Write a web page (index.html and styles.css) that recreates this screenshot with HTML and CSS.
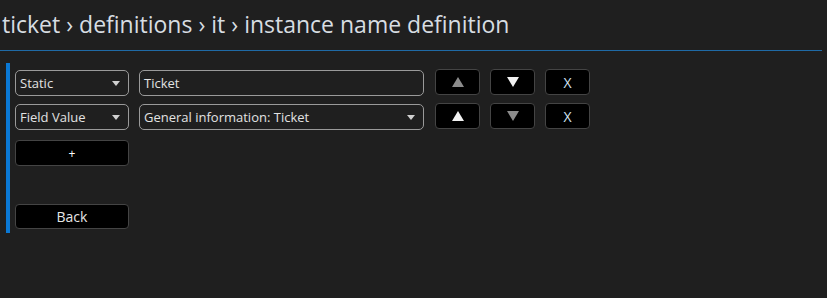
FILE: index.html
```html
<!DOCTYPE html>
<html lang="en">
<head>
    <meta charset="UTF-8">
    <title>instance name definition</title>
    <link rel="stylesheet" href="styles.css">
</head>
<body>
    <div class="crumbs">ticket › definitions › it › instance name definition</div>

    <div class="panel">
        <div class="part_row">
            <div class="pick"><span>Static</span><i class="caret"></i></div>
            <div class="field">Ticket</div>
            <button class="mini off"><svg width="12" height="10" viewBox="0 0 12 10"><path d="M6 0 L12 10 L0 10 Z"/></svg></button>
            <button class="mini"><svg width="12" height="10" viewBox="0 0 12 10"><path d="M0 0 L12 0 L6 10 Z"/></svg></button>
            <button class="mini">X</button>
        </div>
        <div class="part_row">
            <div class="pick"><span>Field Value</span><i class="caret"></i></div>
            <div class="field pick_wide"><span>General information: Ticket</span><i class="caret"></i></div>
            <button class="mini"><svg width="12" height="10" viewBox="0 0 12 10"><path d="M6 0 L12 10 L0 10 Z"/></svg></button>
            <button class="mini off"><svg width="12" height="10" viewBox="0 0 12 10"><path d="M0 0 L12 0 L6 10 Z"/></svg></button>
            <button class="mini">X</button>
        </div>
        <button class="wide_btn add">+</button>
        <button class="wide_btn back">Back</button>
    </div>
</body>
</html>
```
FILE: styles.css
```css
body{
    margin:0;
    background:#1f1f1f;
    font-family:"Open Sans", "Noto Sans", sans-serif;
    color:#e2e2e2;
}
.crumbs{
    margin-right:5px;
    padding:9px 0 0 2px;
    height:41px;
    font-size:23px;
    line-height:30px;
    color:#d7dde2;
    border-bottom:1px solid #1f6aa6;
    white-space:nowrap;
}
.panel{
    margin:12px 0 0 6px;
    border-left:4px solid #0a78d4;
    padding:7px 0 4px 5px;
    display:flex;
    flex-direction:column;
    align-items:flex-start;
}
.part_row{
    display:flex;
    align-items:flex-start;
    height:26px;
    margin-bottom:8px;
}
.pick, .field{
    box-sizing:border-box;
    height:26px;
    border:1px solid #9a9a9a;
    border-radius:5px;
    display:flex;
    align-items:center;
    justify-content:space-between;
    padding:0 8px 0 4px;
    font-size:13px;
}
.pick{
    width:114px;
}
.field{
    width:285px;
    margin-left:10px;
    margin-right:11px;
}
.caret{
    width:0;
    height:0;
    border-left:4px solid transparent;
    border-right:4px solid transparent;
    border-top:5px solid #d0d0d0;
}
.mini{
    box-sizing:border-box;
    width:45px;
    height:26px;
    margin-top:-1px;
    margin-right:10px;
    background:#000;
    border:1px solid #444;
    border-radius:4px;
    color:#d4e4f4;
    font-family:"Open Sans", sans-serif;
    font-size:14px;
    padding:0;
    display:flex;
    align-items:center;
    justify-content:center;
}
.mini svg{
    fill:#f2f2f2;
}
.mini.off svg{
    fill:#8c8c8c;
}
.wide_btn{
    box-sizing:border-box;
    width:114px;
    height:26px;
    background:#000;
    border:1px solid #444;
    border-radius:4px;
    color:#ffffff;
    font-family:"Open Sans", sans-serif;
    padding:0;
}
.add{
    margin-top:2px;
    font-size:12px;
}
.back{
    margin-top:38px;
    height:25px;
    font-size:14px;
    color:#e6e6e6;
}
```
